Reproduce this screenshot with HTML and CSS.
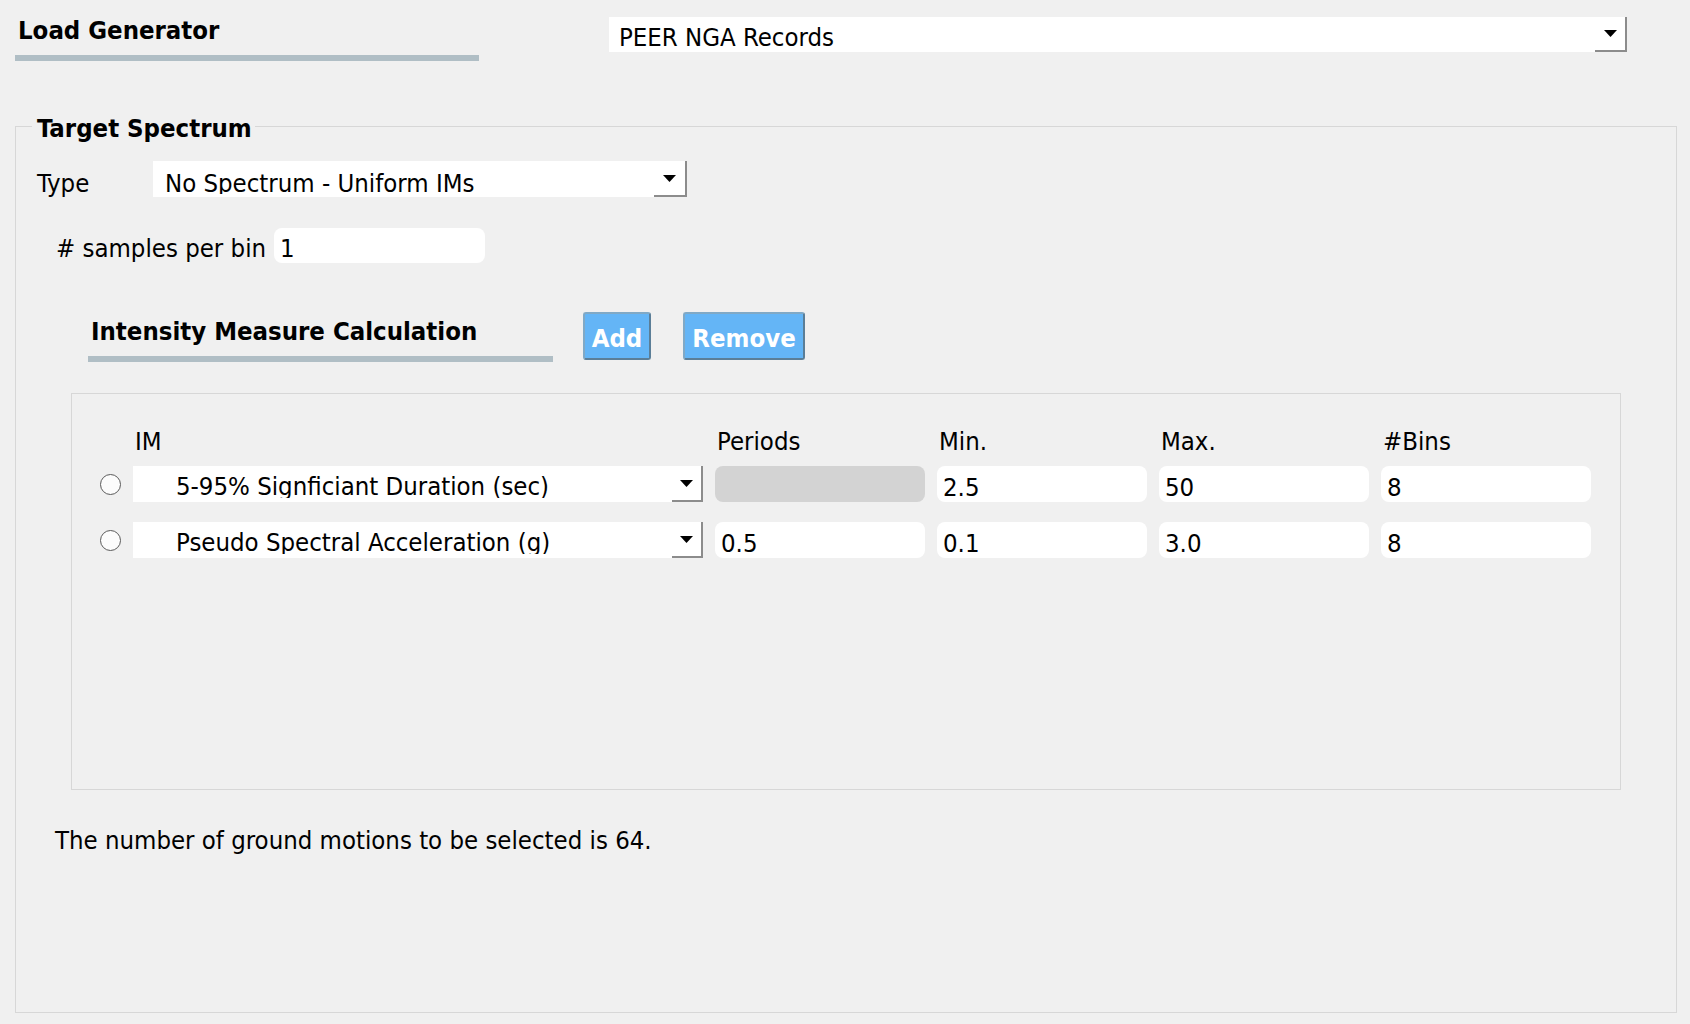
FILE: index.html
```html
<!DOCTYPE html>
<html lang="en">
<head>
<meta charset="utf-8">
<title>Load Generator</title>
<link rel="stylesheet" href="styles.css">
</head>
<body>
<div class="top">
  <div class="section-head head-lg">
    <div class="section-title">Load Generator</div>
    <div class="section-bar"></div>
  </div>
  <div class="combo combo-main">
    <span class="combo-text">PEER NGA Records</span>
    <span class="combo-btn"><svg class="arrow" viewBox="0 0 13 7" width="13" height="7"><path d="M0 0H13L6.5 7Z"/></svg></span>
  </div>
</div>

<fieldset class="group">
  <legend class="group-title">Target Spectrum</legend>

  <div class="row type-row">
    <span class="label type-label">Type</span>
    <div class="combo combo-type">
      <span class="combo-text">No Spectrum - Uniform IMs</span>
      <span class="combo-btn"><svg class="arrow" viewBox="0 0 13 7" width="13" height="7"><path d="M0 0H13L6.5 7Z"/></svg></span>
    </div>
  </div>

  <div class="row samples-row">
    <span class="label samples-label"># samples per bin</span>
    <div class="field samples-field">1</div>
  </div>

  <div class="im-head">
    <div class="section-head head-im">
      <div class="section-title">Intensity Measure Calculation</div>
      <div class="section-bar"></div>
    </div>
    <button class="btn btn-add">Add</button>
    <button class="btn btn-remove">Remove</button>
  </div>

  <div class="im-box">
    <div class="im-row im-header">
      <span></span>
      <span class="col-head">IM</span>
      <span class="col-head">Periods</span>
      <span class="col-head">Min.</span>
      <span class="col-head">Max.</span>
      <span class="col-head">#Bins</span>
    </div>
    <div class="im-row im-item">
      <span class="radio-cell"><span class="radio"></span></span>
      <div class="combo combo-im">
        <span class="combo-text">5-95% Signficiant Duration (sec)</span>
        <span class="combo-btn"><svg class="arrow" viewBox="0 0 13 7" width="13" height="7"><path d="M0 0H13L6.5 7Z"/></svg></span>
      </div>
      <div class="field cell disabled"></div>
      <div class="field cell">2.5</div>
      <div class="field cell">50</div>
      <div class="field cell">8</div>
    </div>
    <div class="im-row im-item">
      <span class="radio-cell"><span class="radio"></span></span>
      <div class="combo combo-im">
        <span class="combo-text">Pseudo Spectral Acceleration (g)</span>
        <span class="combo-btn"><svg class="arrow" viewBox="0 0 13 7" width="13" height="7"><path d="M0 0H13L6.5 7Z"/></svg></span>
      </div>
      <div class="field cell">0.5</div>
      <div class="field cell">0.1</div>
      <div class="field cell">3.0</div>
      <div class="field cell">8</div>
    </div>
  </div>

  <p class="summary">The number of ground motions to be selected is 64.</p>
</fieldset>
</body>
</html>
```

FILE: styles.css
```css
* { box-sizing: border-box; }

html, body {
  margin: 0;
  padding: 0;
  background: #f0f0f0;
  overflow: hidden;
}

body {
  width: 1690px;
  height: 1024px;
  font-family: "DejaVu Sans Condensed", "DejaVu Sans", sans-serif;
  font-stretch: condensed;
  font-size: 25.5px;
  color: #000;
}

/* ---------- top row ---------- */
.top {
  display: flex;
  align-items: flex-start;
  padding: 15px 0 0 15px;
}

.section-head .section-title {
  font-weight: bold;
  line-height: 30px;
  padding-left: 3px;
  white-space: nowrap;
}

.section-bar {
  height: 6px;
  margin-top: 10px;
  background: #b0bec5;
}

.head-lg { width: 464px; }

.combo {
  display: flex;
  background: #fff;
  overflow: hidden;
}

.combo-text {
  flex: 1;
  display: block;
  overflow: hidden;
  white-space: nowrap;
  line-height: 36px;
}

.combo-btn {
  flex: none;
  width: 32px;
  height: 100%;
  display: flex;
  align-items: center;
  justify-content: center;
  border-right: 2px solid #8c8c8c;
  border-bottom: 2px solid #8c8c8c;
}

.arrow { display: block; fill: #000; }

.combo-main {
  margin: 2px 0 0 130px;
  width: 1018px;
  height: 35px;
  overflow: visible;
}
.combo-main .combo-text {
  padding: 6px 0 0 10px;
  height: 35px;
  line-height: 29px;
  overflow: visible;
}

/* ---------- group ---------- */
.group {
  margin: 48px 13px 0 15px;
  padding: 0 0 157px 0;
  border: 1px solid #d7d7d7;
  min-width: 0;
}

.group-title {
  margin-left: 16px;
  padding: 4px 3px 0 5px;
  font-weight: bold;
  line-height: 30px;
}

.row {
  display: flex;
  align-items: flex-start;
}

.label {
  flex: none;
  white-space: nowrap;
}

.type-row { margin: 18px 0 0 21px; }
.type-label { width: 116px; height: 36px; line-height: 36px; padding-top: 4px; }
.combo-type { width: 534px; height: 36px; }
.combo-type .combo-text { padding: 4px 0 0 12px; height: 33px; }
.combo-type .combo-btn { width: 33px; }

.samples-row { margin: 31px 0 0 40px; }
.samples-label { width: 218px; height: 35px; line-height: 35px; padding-top: 3px; }

.field {
  background: #fff;
  border-radius: 8px;
  white-space: nowrap;
  overflow: hidden;
}
.samples-field {
  width: 211px;
  height: 35px;
  line-height: 35px;
  padding: 3px 0 0 6px;
}

/* ---------- IM section ---------- */
.im-head {
  display: flex;
  align-items: flex-start;
  margin: 49px 0 0 72px;
}
.head-im { width: 465px; }
.head-im .section-title { padding-top: 4px; }

.btn {
  height: 48px;
  padding: 2px 0 0 0;
  border: 2px solid #80a9c6;
  border-right-color: #5b7e97;
  border-bottom-color: #5b7e97;
  border-radius: 3px;
  background: #64b5f6;
  color: #fff;
  font: inherit;
  font-weight: bold;
  line-height: 44px;
  text-align: center;
}
.btn-add { width: 68px; margin-left: 30px; }
.btn-remove { width: 122px; margin-left: 32px; }

.im-box {
  margin: 31px 0 0 55px;
  width: 1550px;
  height: 397px;
  border: 1px solid #d7d7d7;
  padding: 32px 0 0 28px;
}

.im-row {
  display: grid;
  grid-template-columns: 21px 570px 210px 210px 210px 210px;
  column-gap: 12px;
}
.im-header { line-height: 30px; margin-bottom: 10px; }
.im-item + .im-item { margin-top: 20px; }

.col-head { padding-left: 2px; white-space: nowrap; }

.radio-cell {
  display: flex;
  align-items: center;
  justify-content: center;
  height: 36px;
}
.radio {
  width: 21px;
  height: 21px;
  border-radius: 50%;
  border: 1px solid #5a5a5a;
  background: #fcfcfc;
}

.combo-im { height: 36px; }
.combo-im .combo-text { padding: 2px 0 0 43px; height: 32px; }
.combo-im .combo-btn { width: 31px; }

.cell {
  height: 36px;
  line-height: 36px;
  padding: 3px 0 0 6px;
}
.cell.disabled { background: #d3d3d3; }

.summary {
  margin: 35px 0 0 39px;
  line-height: 30px;
  white-space: nowrap;
}
```
